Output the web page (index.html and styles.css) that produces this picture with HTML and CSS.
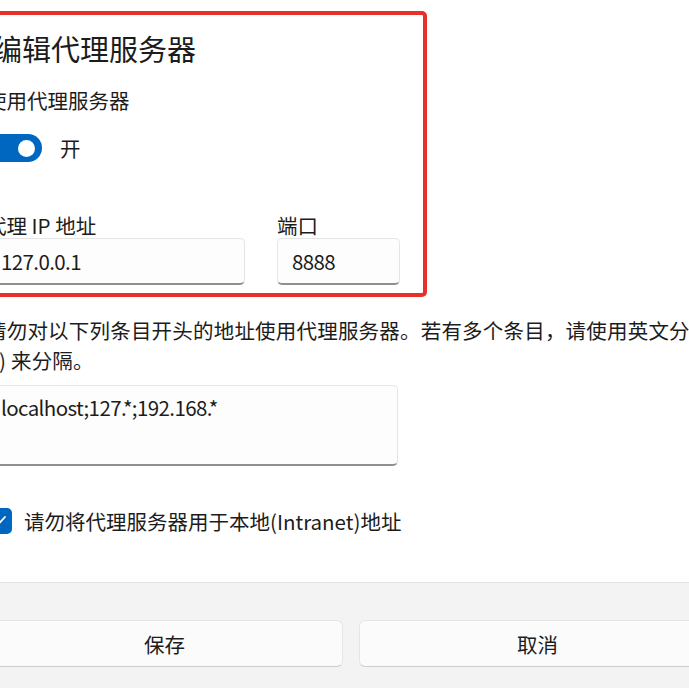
FILE: index.html
```html
<!DOCTYPE html>
<html lang="zh-CN">
<head>
<meta charset="utf-8">
<title>编辑代理服务器</title>
<link rel="stylesheet" href="styles.css">
</head>
<body>
<div class="dialog">
  <div class="body">
    <h1 class="title">编辑代理服务器</h1>
    <div class="label">使用代理服务器</div>
    <div class="toggle-row">
      <span class="toggle"><span class="knob"></span></span>
      <span class="toggle-text">开</span>
    </div>

    <div class="fields">
      <div class="field">
        <div class="field-label">代理 IP 地址</div>
        <div class="input">127.0.0.1</div>
      </div>
      <div class="field">
        <div class="field-label">端口</div>
        <div class="input">8888</div>
      </div>
    </div>

    <p class="hint">请勿对以下列条目开头的地址使用代理服务器。若有多个条目，请使用英文分号<br>(;) 来分隔。</p>
    <div class="textarea">localhost;127.*;192.168.*</div>

    <div class="check-row">
      <span class="checkbox">
        <svg width="26" height="26" viewBox="0 0 26 26"><polyline points="7,13.5 11,17.5 19,9" fill="none" stroke="#fff" stroke-width="1.8" stroke-linecap="round" stroke-linejoin="round"/></svg>
      </span>
      <span class="check-text">请勿将代理服务器用于本地(Intranet)地址</span>
    </div>
  </div>

  <div class="footer">
    <button class="btn">保存</button>
    <button class="btn">取消</button>
  </div>
</div>

<!-- highlight frame drawn over the top section -->
<div class="highlight"></div>
</body>
</html>
```

FILE: styles.css
```css
html, body { margin: 0; height: 100%; }
body { position: relative; overflow: hidden; background: #fff; font-family: "Noto Sans CJK SC", "Noto Sans", sans-serif; font-size: 20.5px; color: #1c1c1c; }

.dialog { width: 802px; margin-left: -50px; }
.body { padding: 28px 36px 0 36px; }

.title { margin: 0 0 0 7px; font-size: 29px; font-weight: 400; line-height: 40px; }
.label { margin-top: 18px; line-height: 28px; }

.toggle-row { display: flex; align-items: center; gap: 18px; margin-top: 20px; height: 28px; }
.toggle { display: flex; align-items: center; justify-content: flex-end; box-sizing: border-box; width: 56px; height: 28px; padding-right: 7px; border-radius: 14px; background: #0067c0; }
.knob { width: 17px; height: 17px; border-radius: 50%; background: #fff; }
.toggle-text { line-height: 28px; }

.fields { display: grid; grid-template-columns: 259px 123px; column-gap: 32px; margin-top: 51px; }
.field-label { line-height: 24px; margin-bottom: 1px; }

.input, .textarea { box-sizing: border-box; border: 1px solid #e5e5e5; border-bottom: 2px solid #8f8f8f; border-radius: 5px; background: #fdfdfd; padding: 0 14px; letter-spacing: -0.6px; }
.input { height: 47px; line-height: 44px; }

.hint { margin: 30px 0 0 0; line-height: 30px; white-space: nowrap; letter-spacing: 0.2px; }
.textarea { width: 412px; height: 81px; margin-top: 10px; padding-top: 7px; line-height: 28px; }

.check-row { display: flex; align-items: center; gap: 12px; margin-top: 41px; height: 28px; }
.checkbox { display: flex; width: 26px; height: 26px; border-radius: 5px; background: #0067c0; }
.check-text { line-height: 28px; }

.footer { margin-top: 47px; border-top: 1px solid #e3e3e3; background: #f3f3f3; padding: 37px 36px 40px 36px; display: grid; grid-template-columns: 1fr 1fr; column-gap: 16px; }
.btn { height: 47px; border: 1px solid #e5e5e5; border-bottom-color: #cdcdcd; border-radius: 6px; background: #fbfbfb; font: inherit; color: #1c1c1c; }

.highlight { position: absolute; top: 11px; left: -40px; width: 467px; height: 286px; box-sizing: border-box; border: 4px solid #e8302a; border-radius: 5px; }
```
